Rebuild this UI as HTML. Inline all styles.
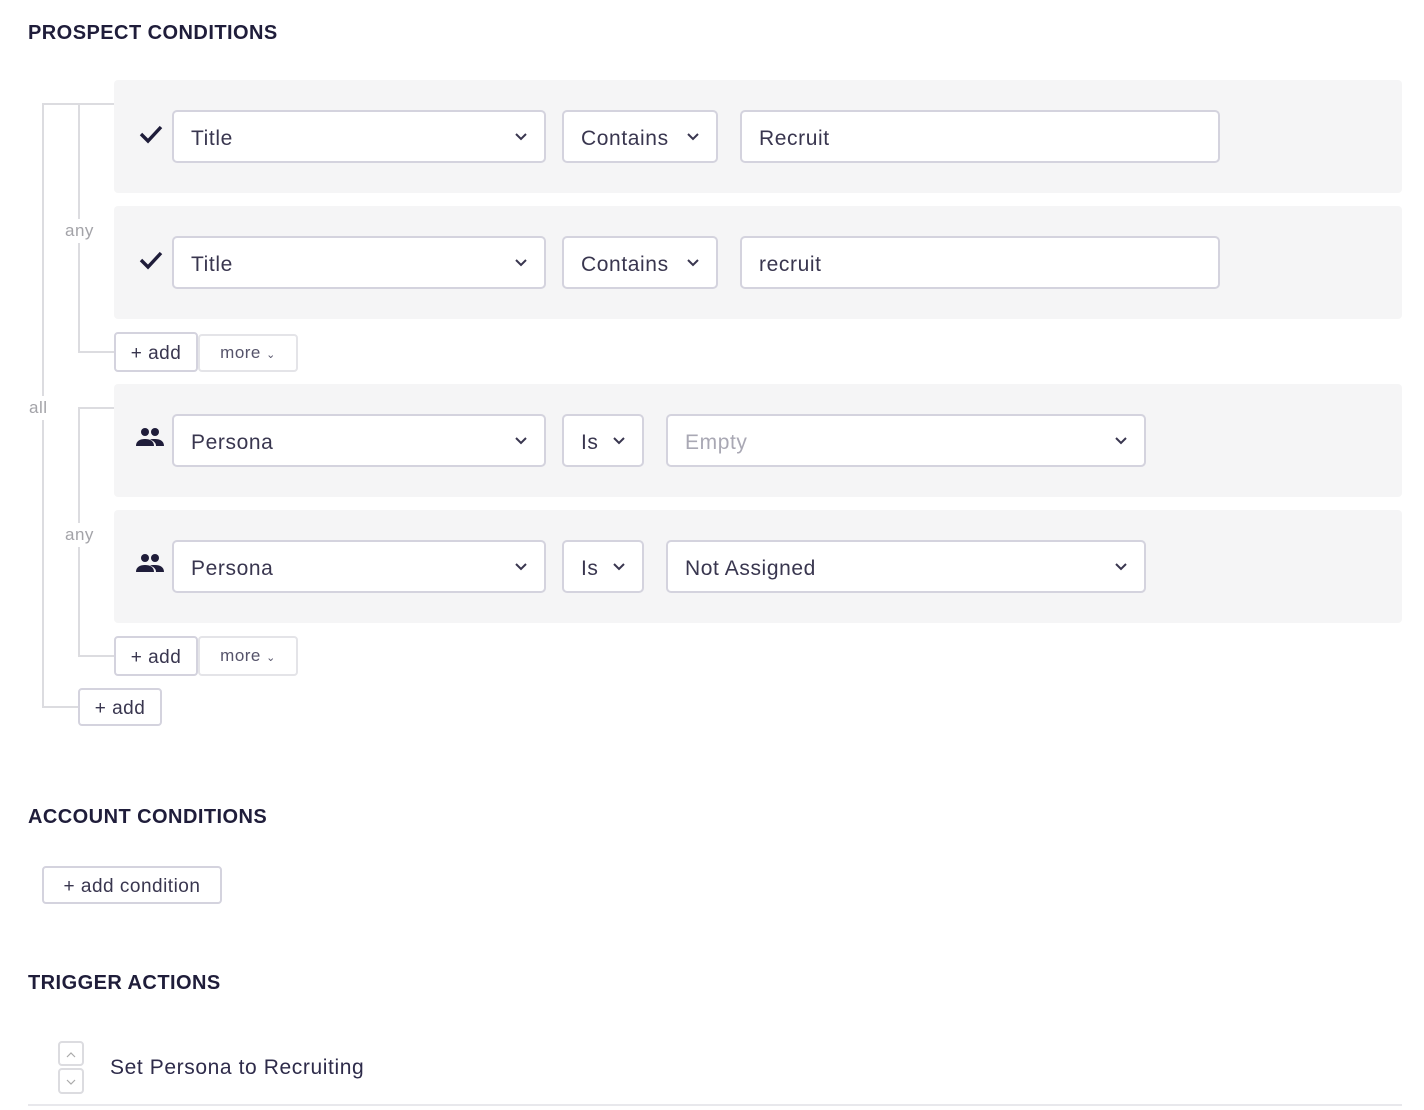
<!DOCTYPE html>
<html><head><meta charset="utf-8"><style>
*{box-sizing:border-box;margin:0;padding:0}
body{width:1424px;height:1110px;background:#fff;font-family:"Liberation Sans",sans-serif;color:#2e2b4a;position:relative;overflow:hidden;letter-spacing:0.5px}
.a{position:absolute}
h2{position:absolute;left:28px;font-size:20px;font-weight:bold;color:#1f1d3a;letter-spacing:0.45px}
.panel{position:absolute;left:114px;width:1288px;height:113px;background:#f5f5f6;border-radius:4px}
.sel{position:absolute;height:53px;background:#fff;border:2px solid #d4d3de;border-radius:5px;font-size:21px;line-height:53px;padding-left:17px;color:#39364f;letter-spacing:0.6px}
.sel svg{position:absolute;right:16px;top:19px}
.ln{position:absolute;background:#dcdce0}
.lbl{position:absolute;font-size:17px;color:#a3a3a8;background:#fff;line-height:20px}
.btn{position:absolute;border:2px solid #d4d3de;border-radius:4px;background:#fff;font-size:19px;text-align:center;color:#39364f}
.more{border:2px solid #e4e4e8;font-size:17px;color:#55536a}
</style></head><body>
<h2 style="top:22px">PROSPECT CONDITIONS</h2>

<div class="ln" style="left:42px;top:103px;width:2px;height:605px"></div>
<div class="ln" style="left:42px;top:103px;width:72px;height:2px"></div>
<div class="ln" style="left:42px;top:706px;width:38px;height:2px"></div>
<div class="ln" style="left:78px;top:103px;width:2px;height:250px"></div>
<div class="ln" style="left:78px;top:351px;width:36px;height:2px"></div>
<div class="ln" style="left:78px;top:407px;width:2px;height:250px"></div>
<div class="ln" style="left:78px;top:407px;width:36px;height:2px"></div>
<div class="ln" style="left:78px;top:655px;width:36px;height:2px"></div>
<div class="lbl" style="left:29px;top:396px;padding:2px 0">all</div>
<div class="lbl" style="left:65px;top:219px;padding:2px 0">any</div>
<div class="lbl" style="left:65px;top:523px;padding:2px 0">any</div>

<div class="panel" style="top:80px"></div>
<div class="panel" style="top:206px"></div>
<div class="panel" style="top:384px"></div>
<div class="panel" style="top:510px"></div>

<svg class="a" style="left:139px;top:124px" width="24" height="20" viewBox="0 0 24 20"><path d="M2 10l7 7L22 3" fill="none" stroke="#1f1d3a" stroke-width="3.4"/></svg>
<svg class="a" style="left:139px;top:250px" width="24" height="20" viewBox="0 0 24 20"><path d="M2 10l7 7L22 3" fill="none" stroke="#1f1d3a" stroke-width="3.4"/></svg>
<svg class="a" style="left:136px;top:427px" width="29" height="20" viewBox="0 0 29 20"><circle cx="9" cy="5" r="4" fill="#1f1d3a"/><circle cx="19" cy="5" r="4" fill="#1f1d3a"/><path d="M0 19c0-5 4-7 9-7s9 2 9 7z M14 12.5c2-0.6 3-0.5 5-0.5 5 0 9 2 9 7h-8c0-3-2-5-6-6.5z" fill="#1f1d3a"/></svg>
<svg class="a" style="left:136px;top:553px" width="29" height="20" viewBox="0 0 29 20"><circle cx="9" cy="5" r="4" fill="#1f1d3a"/><circle cx="19" cy="5" r="4" fill="#1f1d3a"/><path d="M0 19c0-5 4-7 9-7s9 2 9 7z M14 12.5c2-0.6 3-0.5 5-0.5 5 0 9 2 9 7h-8c0-3-2-5-6-6.5z" fill="#1f1d3a"/></svg>

<div class="sel" style="left:172px;top:110px;width:374px">Title<svg width="14" height="10" viewBox="0 0 14 10"><path d="M2 3l5 5 5-5" fill="none" stroke="#39364f" stroke-width="2"/></svg></div>
<div class="sel" style="left:562px;top:110px;width:156px">Contains<svg width="14" height="10" viewBox="0 0 14 10"><path d="M2 3l5 5 5-5" fill="none" stroke="#39364f" stroke-width="2"/></svg></div>
<div class="sel" style="left:740px;top:110px;width:480px">Recruit</div>
<div class="sel" style="left:172px;top:236px;width:374px">Title<svg width="14" height="10" viewBox="0 0 14 10"><path d="M2 3l5 5 5-5" fill="none" stroke="#39364f" stroke-width="2"/></svg></div>
<div class="sel" style="left:562px;top:236px;width:156px">Contains<svg width="14" height="10" viewBox="0 0 14 10"><path d="M2 3l5 5 5-5" fill="none" stroke="#39364f" stroke-width="2"/></svg></div>
<div class="sel" style="left:740px;top:236px;width:480px">recruit</div>
<div class="sel" style="left:172px;top:414px;width:374px">Persona<svg width="14" height="10" viewBox="0 0 14 10"><path d="M2 3l5 5 5-5" fill="none" stroke="#39364f" stroke-width="2"/></svg></div>
<div class="sel" style="left:562px;top:414px;width:82px">Is<svg width="14" height="10" viewBox="0 0 14 10"><path d="M2 3l5 5 5-5" fill="none" stroke="#39364f" stroke-width="2"/></svg></div>
<div class="sel" style="left:666px;top:414px;width:480px;color:#a9a8b4">Empty<svg width="14" height="10" viewBox="0 0 14 10"><path d="M2 3l5 5 5-5" fill="none" stroke="#39364f" stroke-width="2"/></svg></div>
<div class="sel" style="left:172px;top:540px;width:374px">Persona<svg width="14" height="10" viewBox="0 0 14 10"><path d="M2 3l5 5 5-5" fill="none" stroke="#39364f" stroke-width="2"/></svg></div>
<div class="sel" style="left:562px;top:540px;width:82px">Is<svg width="14" height="10" viewBox="0 0 14 10"><path d="M2 3l5 5 5-5" fill="none" stroke="#39364f" stroke-width="2"/></svg></div>
<div class="sel" style="left:666px;top:540px;width:480px">Not Assigned<svg width="14" height="10" viewBox="0 0 14 10"><path d="M2 3l5 5 5-5" fill="none" stroke="#39364f" stroke-width="2"/></svg></div>

<div class="btn" style="left:114px;top:332px;width:84px;height:40px;line-height:40px">+ add</div>
<div class="btn more" style="left:198px;top:334px;width:100px;height:38px;line-height:34px">more <span style="font-size:11px">&#8964;</span></div>
<div class="btn" style="left:114px;top:636px;width:84px;height:40px;line-height:40px">+ add</div>
<div class="btn more" style="left:198px;top:636px;width:100px;height:40px;line-height:36px">more <span style="font-size:11px">&#8964;</span></div>
<div class="btn" style="left:78px;top:688px;width:84px;height:38px;line-height:38px">+ add</div>

<h2 style="top:806px">ACCOUNT CONDITIONS</h2>
<div class="btn" style="left:42px;top:866px;width:180px;height:38px;line-height:37px">+ add condition</div>

<h2 style="top:972px">TRIGGER ACTIONS</h2>
<div class="btn" style="left:58px;top:1041px;width:26px;height:25px;border-color:#dcdce0"><svg width="12" height="8" viewBox="0 0 12 8" style="margin-top:7px"><path d="M2 6l4-4 4 4" fill="none" stroke="#aaa" stroke-width="1.2"/></svg></div>
<div class="btn" style="left:58px;top:1068px;width:26px;height:26px;border-color:#dcdce0"><svg width="12" height="8" viewBox="0 0 12 8" style="margin-top:8px"><path d="M2 2l4 4 4-4" fill="none" stroke="#aaa" stroke-width="1.2"/></svg></div>
<div class="a" style="left:110px;top:1056px;font-size:21px;color:#2e2b4a;letter-spacing:0.6px">Set Persona to Recruiting</div>
<div class="ln" style="left:28px;top:1104px;width:1374px;height:2px;background:#e8e8ec"></div>
</body></html>
